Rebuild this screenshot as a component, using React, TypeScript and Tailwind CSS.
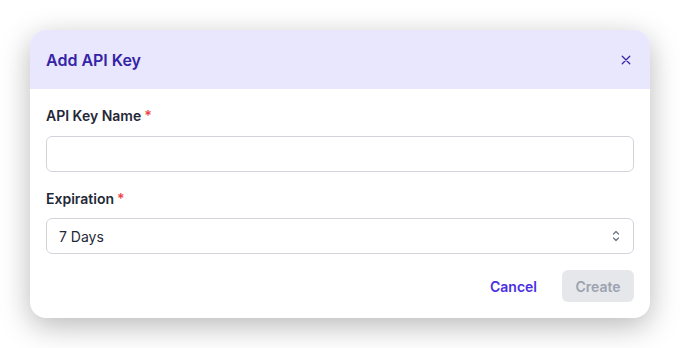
import React from 'react';

const font = { fontFamily: 'Inter, "Noto Sans", sans-serif' };

export default function App() {
  return (
    <div className="bg-white w-[680px] h-[348px] p-[30px]" style={font}>
      <div className="w-[620px] rounded-2xl bg-white shadow-[0_8px_30px_rgba(0,0,0,0.28)] overflow-hidden">
        {/* Header */}
        <div className="h-[59px] bg-[#e9e7fd] flex items-center justify-between px-4">
          <h2 className="text-[16px] font-semibold text-[#3423a6]">Add API Key</h2>
          <button className="w-4 h-4 flex items-center justify-center text-[#3423a6]">
            <svg width="10" height="10" viewBox="0 0 12 12" fill="none" stroke="currentColor" strokeWidth="1.5" strokeLinecap="round">
              <path d="M1.5 1.5l9 9M10.5 1.5l-9 9" />
            </svg>
          </button>
        </div>

        {/* Body */}
        <div className="px-4 pt-[16px] pb-4">
          <label className="flex items-center h-5 text-[14px] font-semibold text-[#1f2937]">
            API Key Name<span className="text-[#ef4444] ml-[3px]">*</span>
          </label>
          <input className="mt-[11px] block w-full h-9 rounded-md border border-[#d1d5db] px-3 text-sm outline-none" />

          <label className="mt-[16px] flex items-center h-5 text-[14px] font-semibold text-[#1f2937]">
            Expiration<span className="text-[#ef4444] ml-[3px]">*</span>
          </label>
          <div className="mt-[10px] h-9 rounded-md border border-[#d1d5db] flex items-center justify-between pl-3 pr-3">
            <span className="text-[14px] text-[#1f2937]">7 Days</span>
            <svg width="10" height="14" viewBox="0 0 10 14" fill="none" stroke="#6b7280" strokeWidth="1.2" strokeLinecap="round" strokeLinejoin="round">
              <path d="M2.5 5l2.5-2.5L7.5 5M2.5 9l2.5 2.5L7.5 9" />
            </svg>
          </div>

          <div className="mt-4 flex justify-end items-center gap-[25px]">
            <button className="text-[14px] font-semibold text-[#4a2fe0]">Cancel</button>
            <button className="h-8 w-[72px] rounded-md bg-[#e5e7eb] text-[14px] font-semibold text-[#9ca3af]">Create</button>
          </div>
        </div>
      </div>
    </div>
  );
}
